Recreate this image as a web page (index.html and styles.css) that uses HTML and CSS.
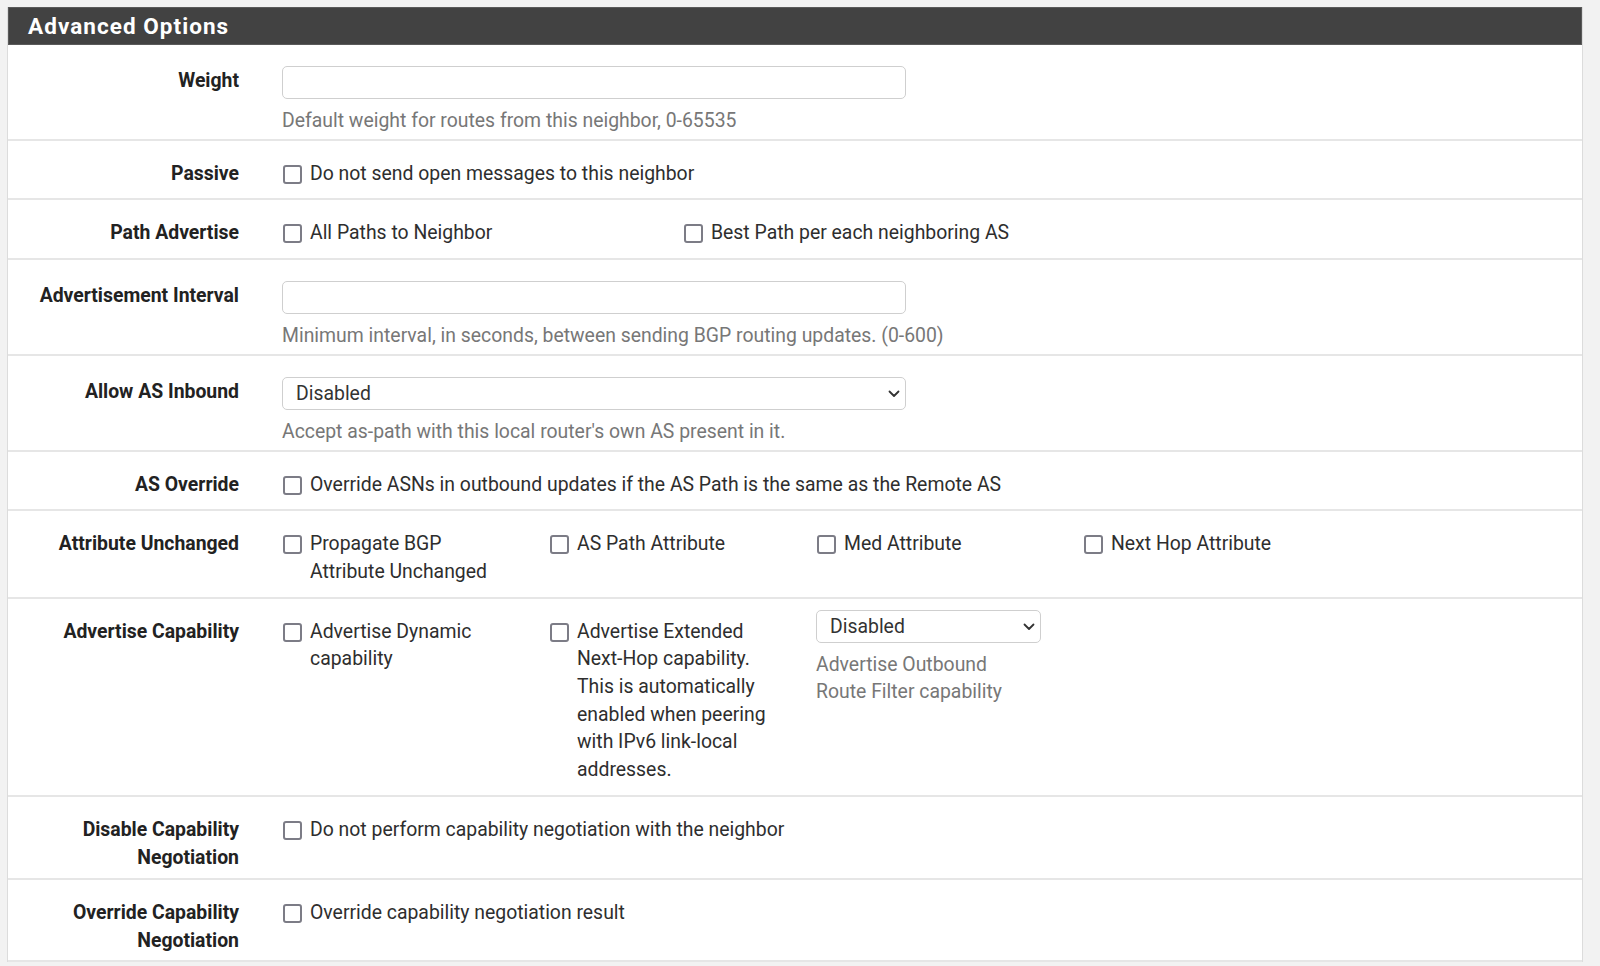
FILE: index.html
```html
<!DOCTYPE html>
<html>
<head>
<meta charset="utf-8">
<link rel="stylesheet" href="styles.css">
</head>
<body>
<div class="panel">
  <div class="panel-heading">Advanced Options</div>

  <div class="row row-input row-first">
    <div class="label label-input">Weight</div>
    <div class="content">
      <input class="text-input" type="text">
      <div class="help">Default weight for routes from this neighbor, 0-65535</div>
    </div>
  </div>

  <div class="row">
    <div class="label">Passive</div>
    <div class="content">
      <label class="chk"><input type="checkbox"><span>Do not send open messages to this neighbor</span></label>
    </div>
  </div>

  <div class="row">
    <div class="label">Path Advertise</div>
    <div class="content group">
      <div class="col col-wide"><label class="chk"><input type="checkbox"><span>All Paths to Neighbor</span></label></div>
      <div class="col col-wide"><label class="chk"><input type="checkbox"><span>Best Path per each neighboring AS</span></label></div>
    </div>
  </div>

  <div class="row row-input">
    <div class="label label-input">Advertisement Interval</div>
    <div class="content">
      <input class="text-input" type="text">
      <div class="help">Minimum interval, in seconds, between sending BGP routing updates. (0-600)</div>
    </div>
  </div>

  <div class="row row-input">
    <div class="label label-input">Allow AS Inbound</div>
    <div class="content">
      <div class="select-wrap select-wide">
        <select class="select"><option>Disabled</option></select>
        <svg class="chev" viewBox="0 0 12 8" width="12" height="8"><path d="M1.5 1.5 L6 6 L10.5 1.5" fill="none" stroke="#333" stroke-width="1.8" stroke-linecap="round" stroke-linejoin="round"/></svg>
      </div>
      <div class="help">Accept as-path with this local router's own AS present in it.</div>
    </div>
  </div>

  <div class="row">
    <div class="label">AS Override</div>
    <div class="content">
      <label class="chk"><input type="checkbox"><span>Override ASNs in outbound updates if the AS Path is the same as the Remote AS</span></label>
    </div>
  </div>

  <div class="row">
    <div class="label">Attribute Unchanged</div>
    <div class="content group">
      <div class="col"><label class="chk"><input type="checkbox"><span>Propagate BGP Attribute Unchanged</span></label></div>
      <div class="col"><label class="chk"><input type="checkbox"><span>AS Path Attribute</span></label></div>
      <div class="col"><label class="chk"><input type="checkbox"><span>Med Attribute</span></label></div>
      <div class="col"><label class="chk"><input type="checkbox"><span>Next Hop Attribute</span></label></div>
    </div>
  </div>

  <div class="row">
    <div class="label">Advertise Capability</div>
    <div class="content group">
      <div class="col"><label class="chk"><input type="checkbox"><span>Advertise Dynamic capability</span></label></div>
      <div class="col"><label class="chk"><input type="checkbox"><span>Advertise Extended Next-Hop capability. This is automatically enabled when peering with IPv6 link-local addresses.</span></label></div>
      <div class="col col-select">
        <div class="select-wrap select-small">
          <select class="select"><option>Disabled</option></select>
          <svg class="chev" viewBox="0 0 12 8" width="12" height="8"><path d="M1.5 1.5 L6 6 L10.5 1.5" fill="none" stroke="#333" stroke-width="1.8" stroke-linecap="round" stroke-linejoin="round"/></svg>
        </div>
        <div class="help help-narrow">Advertise Outbound Route Filter capability</div>
      </div>
    </div>
  </div>

  <div class="row row-two">
    <div class="label">Disable Capability Negotiation</div>
    <div class="content">
      <label class="chk"><input type="checkbox"><span>Do not perform capability negotiation with the neighbor</span></label>
    </div>
  </div>

  <div class="row row-last">
    <div class="label">Override Capability Negotiation</div>
    <div class="content">
      <label class="chk"><input type="checkbox"><span>Override capability negotiation result</span></label>
    </div>
  </div>
</div>
</body>
</html>
```

FILE: styles.css
```css
html, body {
  margin: 0;
  padding: 0;
}

body {
  background: #f2f2f2;
  font-family: Roboto, "Noto Sans", sans-serif;
  font-size: 19.4px;
  color: #2e2e2e;
  height: 966px;
  overflow: hidden;
}

.panel {
  margin: 7px 17px 0 7px;
  background: #fff;
  border-left: 1px solid #dcdcdc;
  border-right: 1px solid #dcdcdc;
}

.panel-heading {
  background: #424242;
  height: 38px;
  box-sizing: border-box;
  border: 1px solid #5a5a5a;
  padding-left: 19px;
  display: flex;
  align-items: center;
  color: #fff;
  font-weight: 700;
  font-size: 22.5px;
  letter-spacing: 1.05px;
}

.row {
  display: grid;
  grid-template-columns: 231px 1fr;
  column-gap: 43px;
  padding: 19px 0 11px;
  border-bottom: 2px solid #e6e6e6;
  line-height: 27.7px;
}

.row-input {
  padding: 21px 0 4px;
}

.row-first {
  padding-bottom: 4px;
}

.row-two {
  padding-bottom: 7px;
}

.row-last {
  padding-bottom: 5px;
}

.label {
  text-align: right;
  font-weight: 700;
  color: #222;
}

.label-input {
  padding-top: 1px;
}

.content {
  min-width: 0;
}

.text-input {
  display: block;
  width: 624px;
  height: 33px;
  box-sizing: border-box;
  border: 1px solid #cfcfcf;
  border-radius: 5px;
  margin: 0;
  background: #fff;
}

.help {
  color: #777;
  margin-top: 8px;
}

.chk {
  display: flex;
  align-items: flex-start;
  gap: 8px;
}

.chk input {
  appearance: none;
  -webkit-appearance: none;
  flex: none;
  width: 19px;
  height: 19px;
  margin: 5px 0 0 1px;
  box-sizing: border-box;
  border: 2px solid #7c7c86;
  border-radius: 3px;
  background: #fff;
}

.group {
  display: flex;
}

.col {
  width: 267px;
  padding-right: 40px;
  box-sizing: border-box;
  flex: none;
}

.col-wide {
  width: 401px;
}

.col-select {
  width: 267px;
  margin-top: -8px;
}

.select-wrap {
  position: relative;
}

.select-wide {
  width: 624px;
}

.select-small {
  width: 225px;
}

.select {
  display: block;
  width: 100%;
  height: 33px;
  box-sizing: border-box;
  appearance: none;
  -webkit-appearance: none;
  border: 1px solid #cfcfcf;
  border-radius: 5px;
  background: #fff;
  padding: 0 30px 0 13px;
  font-family: Roboto, "Noto Sans", sans-serif;
  font-size: 19.4px;
  color: #333;
}

.chev {
  position: absolute;
  right: 6px;
  top: 13px;
  pointer-events: none;
}

.help-narrow {
  max-width: 205px;
}
```
